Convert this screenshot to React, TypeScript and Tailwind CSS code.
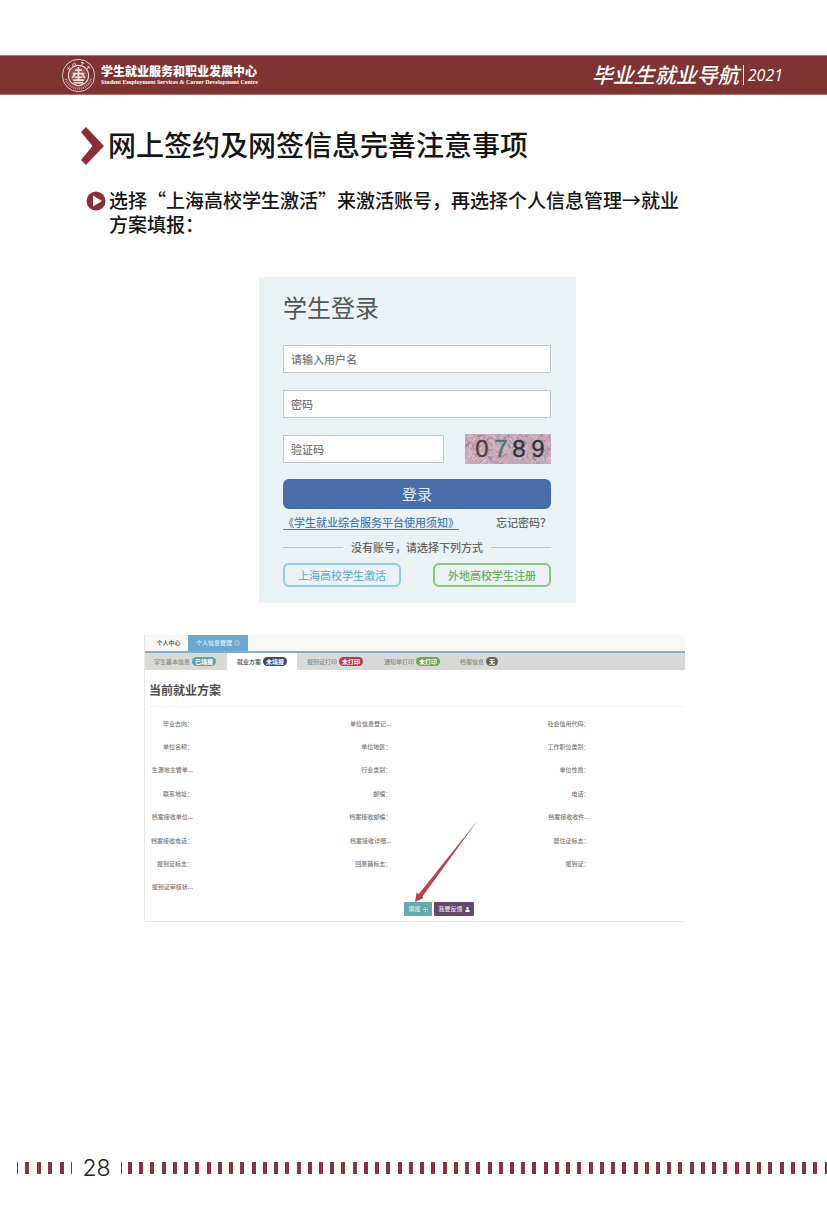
import React from "react";
import { FaPlus, FaUser, FaTimesCircle } from "react-icons/fa";

const sans = "font-['Noto_Sans_CJK_SC','Noto_Sans',sans-serif]";

function Seal() {
  return (
    <svg viewBox="0 0 36 36" className="size-[35px] shrink-0 text-[#f3dedb]" fill="none" stroke="currentColor" aria-hidden="true">
      <circle cx="18" cy="18" r="16.6" strokeWidth="0.9" />
      <circle cx="18" cy="18" r="10.4" strokeWidth="1.1" />
      <path d="M5 21.500A13.500 13.500 0 0 0 31 21.500" strokeWidth="2.4" strokeDasharray="1.1 0.9" opacity="0.6" />
      <circle cx="18" cy="18" r="8.6" fill="currentColor" stroke="none" opacity="0.2" />
      <path strokeWidth="1.7" d="M18 9.500v6M14.500 12.500h7M12 16h12M14.500 16.500l-3 4M21.500 16.500l3 4M18 16.500v6M14 19.800h8M12.500 22.800h11" />
      <path strokeWidth="1.6" d="M13 25.600h10" />
      <path strokeWidth="0.9" d="M6.500 10l3 2M8.800 8.500l-2 3.600M12.800 5.200l-.8 3.200M14 4.800l1.600 2.800M20.500 4.500l3.400 1.200M22.600 3.800l-1.200 3.800M27 8.500l3 2.200M29 8l-2.200 3.800" />
    </svg>
  );
}

function Header() {
  return (
    <header className="flex h-10 items-center justify-between border-y border-[#a87472] bg-[#7e3432] pr-11 pl-[61px] text-white">
      <div className="flex items-center gap-[5px]">
        <Seal />
        <div className="flex flex-col whitespace-nowrap">
          <span className="text-[12px] leading-[15px] font-black">学生就业服务和职业发展中心</span>
          <span className="font-['Liberation_Serif',serif] text-[6px] leading-[9px] font-bold">
            Student Employment Services &amp; Career Development Centre
          </span>
        </div>
      </div>
      <div className="flex items-center gap-1 whitespace-nowrap">
        <span className="pb-[2px] text-[21px] leading-6 font-medium italic">毕业生就业导航</span>
        <span className="h-5 w-px bg-white" />
        <span className="font-['Open_Sans',sans-serif] text-[16px] leading-6 font-medium italic">2021</span>
      </div>
    </header>
  );
}

function speckles(seed: number, count: number) {
  let s = seed;
  const next = (n: number) => {
    s = (s * 1103515245 + 12345) % 2147483648;
    return Math.floor((s / 2147483648) * n);
  };
  return Array.from(
    { length: count },
    () => `M${next(86)} ${next(30)}l${next(9) - 4} ${next(9) - 4}l${next(7) - 3} ${next(7) - 3}`
  ).join("");
}

const darkSpeckles = speckles(7, 130);
const lightSpeckles = speckles(91, 110);

function Captcha() {
  return (
    <svg viewBox="0 0 86 30" className="h-[30px] w-[86px] shrink-0" role="img" aria-label="验证码">
      <rect width="86" height="30" fill="#c6a9b8" />
      <path d={darkSpeckles} fill="none" stroke="#8f7887" strokeWidth="0.9" opacity="0.6" />
      <path d={lightSpeckles} fill="none" stroke="#e3cbd7" strokeWidth="0.9" opacity="0.7" />
      <g fontFamily="Liberation Sans, sans-serif" fontSize="24" textAnchor="middle">
        <text x="17" y="23" fill="#5b3a35" stroke="#5b3a35" strokeWidth="0.3">0</text>
        <text x="36" y="23" fill="#44786c" stroke="#44786c" strokeWidth="0.3">7</text>
        <text x="54" y="23" fill="#2c3237" stroke="#2c3237" strokeWidth="0.3">8</text>
        <text x="73" y="23" fill="#2c3237" stroke="#2c3237" strokeWidth="0.3">9</text>
      </g>
    </svg>
  );
}

const field =
  "block h-7 w-full min-w-0 border border-[#c3c7ca] bg-white px-[7px] text-[11px] leading-4 font-medium text-[#555] placeholder:text-[#777] placeholder:opacity-100";

function LoginCard() {
  return (
    <form
      className="w-full max-w-[317px] bg-[#eaf2f6] pt-4 pr-[25px] pb-4 pl-6 text-[11px] font-medium text-[#666]"
      onSubmit={(e) => e.preventDefault()}
    >
      <h2 className="text-[24px] leading-7 font-normal text-[#555]">学生登录</h2>
      <div className="mt-6 flex flex-col gap-[17px]">
        <input className={field} aria-label="用户名" placeholder="请输入用户名" />
        <input className={field} type="password" aria-label="密码" placeholder="密码" />
        <div className="flex h-7 items-center justify-between gap-[21px]">
          <input className={field} aria-label="验证码" placeholder="验证码" />
          <Captcha />
        </div>
      </div>
      <button type="submit" className="mt-4 h-[30px] w-full rounded-md bg-[#486da7] text-[15px] leading-5 font-normal text-[#e9eff8]">
        登录
      </button>
      <div className="mt-1 flex items-center justify-between whitespace-nowrap">
        <a href="#notice" className="leading-[18px] text-[#4a7cb0] underline underline-offset-2">《学生就业综合服务平台使用须知》</a>
        <a href="#reset" className="leading-[18px]">忘记密码？</a>
      </div>
      <div className="mt-[7px] flex items-center gap-2 whitespace-nowrap">
        <span className="h-px flex-1 bg-[#bfc5c8]" />
        <span className="leading-[18px]">没有账号，请选择下列方式</span>
        <span className="h-px flex-1 bg-[#bfc5c8]" />
      </div>
      <div className="mt-[7px] flex justify-between">
        <button type="button" className="h-6 w-[118px] rounded-md border-2 border-[#96c9e4] leading-4 text-[#6fb1d6]">上海高校学生激活</button>
        <button type="button" className="h-6 w-[118px] rounded-md border-2 border-[#8cc585] leading-4 text-[#68b05f]">外地高校学生注册</button>
      </div>
    </form>
  );
}

const tabs = [
  { name: "学生基本信息", state: "已填报", color: "bg-[#58a3b0]", box: "pl-[9px] w-[82px]" },
  { name: "就业方案", state: "未填报", color: "bg-[#46426a]", box: "pl-[10px] w-[70px] bg-white text-[#444]" },
  { name: "报到证打印", state: "未打印", color: "bg-[#b93b42]", box: "pl-[10px] w-[77px]" },
  { name: "通知单打印", state: "未打印", color: "bg-[#63a75b]", box: "pl-[10px] w-[77px]" },
  { name: "档案信息", state: "无", color: "bg-[#626262]", box: "pl-[9px] w-[60px]" },
];

const rows = [
  ["毕业去向：", "单位信息登记...", "社会信用代码："],
  ["单位名称：", "单位地区：", "工作职位类别："],
  ["生源地主管单...", "行业类别：", "单位性质："],
  ["联系地址：", "邮编：", "电话："],
  ["档案接收单位...", "档案接收邮编：", "档案接收收件..."],
  ["档案接收电话：", "档案接收详细...", "居住证标志："],
  ["报到证标志：", "回原籍标志：", "报到证："],
  ["报到证审核状...", "", ""],
];

function PlanPanel() {
  return (
    <section className="relative w-full max-w-[541px] border-b border-l border-[#e6e8e8] text-[6px] leading-[10px] font-medium whitespace-nowrap text-[#777]">
      <nav className="flex h-[18px] border-b-2 border-[#7fadd0] bg-[#f8f8f6]">
        <button type="button" className="w-[43px] pl-1 text-[#444]">个人中心</button>
        <button type="button" className="flex w-[60px] items-center justify-center gap-[2px] bg-[#6ca6d3] text-[#e2f0fb]">
          个人信息管理
          <FaTimesCircle className="size-[6px] text-[#a9b9c0]" />
        </button>
      </nav>
      <nav className="flex h-[17px] bg-[#d9dad7] text-[#858a8b]">
        {tabs.map((t) => (
          <button key={t.name} type="button" className={`flex shrink-0 items-center gap-[2px] ${t.box}`}>
            {t.name}
            <span className={`rounded-full px-[3px] leading-[9px] font-bold text-white ${t.color}`}>{t.state}</span>
          </button>
        ))}
      </nav>
      <div className="pl-1">
        <h3 className="border-b border-[#f1f2f2] pt-[11px] pb-[7px] text-[12px] leading-[18px] font-bold text-[#505050]">当前就业方案</h3>
        <table className="mt-[5px] h-[187px] w-full table-fixed">
          <colgroup>
            <col className="w-[37%]" />
            <col className="w-[37%]" />
            <col className="w-[26%]" />
          </colgroup>
          <tbody>
            {rows.map((r) => (
              <tr key={r[0]}>
                {r.map((label, i) => (
                  <th key={i} scope="row" className="p-0 text-left align-middle font-medium">
                    <span className="block w-11 text-right">{label}</span>
                  </th>
                ))}
              </tr>
            ))}
          </tbody>
        </table>
        <div className="mt-[3px] flex justify-center gap-[2px] pb-[5px] pl-11">
          <button type="button" className="flex h-[14px] w-7 items-center justify-center gap-[2px] rounded-[1px] bg-[#65aaae] text-[#d6efef]">
            填报 <FaPlus className="size-[5px] text-white" />
          </button>
          <button type="button" className="flex h-[14px] w-10 items-center justify-center gap-[2px] rounded-[1px] bg-[#624a6c] text-[#e6dfea]">
            我要反馈 <FaUser className="size-[5px] text-white" />
          </button>
        </div>
      </div>
      <svg viewBox="0 0 64 82" className="absolute bottom-[19px] left-[270px] h-[82px] w-16" aria-hidden="true">
        <path d="M63 0L7.500 76.500L8.500 78L0 82L1.500 72.500L3.800 74Z" fill="#b9434a" />
      </svg>
    </section>
  );
}

function Bars({ count }: { count: number }) {
  return (
    <>
      {Array.from({ length: count }, (_, i) => (
        <span key={i} className="h-3 w-1 shrink-0 bg-[#8a3439]" />
      ))}
    </>
  );
}

function Footer() {
  return (
    <footer className="mt-auto flex h-7 items-center overflow-hidden pl-[17px]">
      <div className="flex w-[55px] items-center justify-between">
        <span className="h-3 w-px bg-[#8a3439]" />
        <Bars count={4} />
        <span className="h-3 w-px bg-[#8a3439]" />
      </div>
      <span className="w-[49px] text-center font-['Inter',sans-serif] text-[23px] leading-7 font-light text-[#222]">28</span>
      <span className="mr-[6px] h-3 w-px bg-[#8a3439]" />
      <div className="-mr-[2px] flex flex-1 items-center justify-between">
        <Bars count={63} />
      </div>
    </footer>
  );
}

export default function App() {
  return (
    <div lang="zh-CN" className={`flex min-h-screen flex-col overflow-hidden bg-white pt-[55px] pb-[42px] text-[#151515] ${sans}`}>
      <Header />
      <main className="flex flex-col pb-10">
        <div className="mt-8 flex items-center gap-1 pl-20">
          <svg viewBox="0 0 24 38" className="h-[38px] w-6 shrink-0" aria-hidden="true">
            <path d="M6 0L24 19L6 38L1 33L12.500 19L1 5Z" fill="#8b2f35" />
          </svg>
          <h1 className="pb-1 text-[28px] leading-8 font-medium">网上签约及网签信息完善注意事项</h1>
        </div>
        <div className="mt-[23px] flex gap-[3px] pr-36 pl-[86px]">
          <svg viewBox="0 0 20 20" className="mt-[3px] size-5 shrink-0" aria-hidden="true">
            <circle cx="10" cy="10" r="9.500" fill="#8b2f35" />
            <path d="M7 4.500L16 10L7 15.500Z" fill="#fff" />
          </svg>
          <p className="text-[19px] leading-6 font-medium">
            选择“上海高校学生激活”来激活账号，再选择个人信息管理→就业方案填报：
          </p>
        </div>
        <div className="mt-[41px] flex justify-center pl-2">
          <LoginCard />
        </div>
        <div className="mt-8 flex justify-center pl-[2px]">
          <PlanPanel />
        </div>
      </main>
      <Footer />
    </div>
  );
}
